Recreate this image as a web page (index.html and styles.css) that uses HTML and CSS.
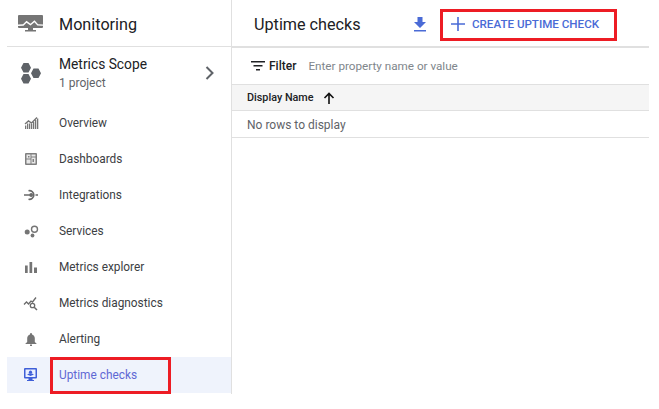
FILE: index.html
```html
<!DOCTYPE html>
<html lang="en">
<head>
<meta charset="utf-8">
<title>Uptime checks</title>
<link rel="stylesheet" href="styles.css">
</head>
<body>
<div class="app">
  <aside class="sidebar">
    <div class="brand">
      <svg class="brand-icon" width="25" height="17" viewBox="0 0 25 17"><path fill="#757575" d="M1 0h23a1 1 0 0 1 1 1v11a1 1 0 0 1-1 1H15v2h3v1.500H7V15h3v-2H1a1 1 0 0 1-1-1V1a1 1 0 0 1 1-1z"/><path fill="#fff" d="M0 9.500l5-.2 3.500-3.500 4 3 4-3.500 3.500 4 5 .2v1.300l-5.600-.2-3-3.300-3.900 3.300-4-2.900-3 3-5.500.2z"/></svg>
      <span class="brand-name">Monitoring</span>
    </div>
    <div class="scope">
      <svg class="scope-icon" width="21" height="21" viewBox="0 0 21 21"><path fill="#5f6368" d="M2.500 0h5L10 4.700 7.500 9.400h-5L0 4.700zM2.500 11h5L10 15.700l-2.500 4.700h-5L0 15.700zM12.500 5.500h5L20 10.200l-2.500 4.700h-5L10 10.200z"/></svg>
      <div class="scope-text">
        <div class="scope-title">Metrics Scope</div>
        <div class="scope-sub">1 project</div>
      </div>
      <svg class="chevron" width="9" height="14" viewBox="0 0 9 14"><path fill="none" stroke="#5f6368" stroke-width="2" d="M1.500 1l6 6-6 6"/></svg>
    </div>
    <nav class="nav">
      <a class="nav-item"><svg class="nav-icon" width="16" height="16" viewBox="0 0 16 16"><path fill="#757575" d="M2 10.500h1.300V14H2zM4 8.500h1.300V14H4zM6 8.500h1.300V14H6zM8 9h1.300v5H8zM10 7h1.300v7H10zM12 5h1.300v9H12zM14 3.500h1.300V14H14z"/><path fill="none" stroke="#757575" stroke-width="1.400" d="M2 9l3.500-3 3 2L14 2.500"/></svg><span>Overview</span></a>
      <a class="nav-item"><svg class="nav-icon" width="16" height="16" viewBox="0 0 16 16"><rect x="2" y="2" width="12" height="12" rx="1" fill="#808080"/><path fill="#e8e8e8" d="M3.500 3.500h4v4h-4zM8.500 3.500h4v2h-4zM8.500 6.500h4v6h-4zM3.500 8.500h4v4h-4z"/><path fill="#808080" d="M5 5h1.500v1.500H5zM9.500 8h1.500v3H9.500z"/></svg><span>Dashboards</span></a>
      <a class="nav-item"><svg class="nav-icon" width="16" height="16" viewBox="0 0 16 16"><path fill="none" stroke="#6a6a6a" stroke-width="1.600" d="M5.500 3.700a4.400 4.400 0 1 1 0 8.600M1 8h7.500M12.500 8H15"/><circle cx="8.200" cy="8" r="1.900" fill="#6a6a6a"/></svg><span>Integrations</span></a>
      <a class="nav-item"><svg class="nav-icon" width="16" height="16" viewBox="0 0 16 16"><circle cx="4.200" cy="9" r="2.500" fill="#757575"/><circle cx="11.500" cy="6.300" r="3" fill="none" stroke="#757575" stroke-width="1.400"/><circle cx="9.500" cy="12.500" r="1.900" fill="#757575"/></svg><span>Services</span></a>
      <a class="nav-item"><svg class="nav-icon" width="16" height="16" viewBox="0 0 16 16"><path fill="#757575" d="M2 6.500h2.700V14H2zM6.500 3h2.700v11H6.500zM11 8.500h3V14h-3z"/></svg><span>Metrics explorer</span></a>
      <a class="nav-item"><svg class="nav-icon" width="16" height="16" viewBox="0 0 16 16"><path fill="none" stroke="#6a6a6a" stroke-width="1.300" d="M1 9.500l2.500-2.500 2 2L8 6l1.500 1L13 2.500"/><circle cx="9.500" cy="10.500" r="2.200" fill="none" stroke="#6a6a6a" stroke-width="1.300"/><path stroke="#6a6a6a" stroke-width="1.500" d="M11.200 12.200l2.800 2.800"/></svg><span>Metrics diagnostics</span></a>
      <a class="nav-item"><svg class="nav-icon" width="16" height="16" viewBox="0 0 16 16"><path fill="#757575" d="M8 2a1 1 0 0 1 1 1v.500c1.700.5 2.800 2 2.800 3.800V11l1.700 1.500v.500h-11v-.500L4.200 11V7.300c0-1.800 1.100-3.300 2.800-3.800V3a1 1 0 0 1 1-1zM7 13.500h2V15H7z"/></svg><span>Alerting</span></a>
      <a class="nav-item active"><svg class="nav-icon" width="16" height="16" viewBox="0 0 16 16"><path fill="#3f5fd8" d="M2 1h11a1 1 0 0 1 1 1v8.500a1 1 0 0 1-1 1H9.500V13H11v1H4v-1h1.500v-1.500H2a1 1 0 0 1-1-1V2a1 1 0 0 1 1-1z"/><path fill="#eaf0ff" d="M2.500 2.500h10v7.500h-10z"/><circle cx="7.500" cy="5.200" r="1.600" fill="#3f5fd8"/><path fill="#3f5fd8" d="M4 7.500c1.500-1.500 5.500-1.500 7 0L7.500 9z"/></svg><span>Uptime checks</span></a>
    </nav>
  </aside>
  <main class="content">
    <header class="topbar">
      <h1 class="title">Uptime checks</h1>
      <svg class="download" width="14" height="15" viewBox="0 0 14 15"><path fill="#4a6bd6" d="M4.500 0h5v5H13L7 11 1 5h3.500zM1 13h12v1.600H1z"/></svg>
      <button class="create">
        <svg width="14" height="14" viewBox="0 0 14 14"><path fill="none" stroke="#4a6bd6" stroke-width="1.600" d="M7 0v14M0 7h14"/></svg>
        <span>CREATE UPTIME CHECK</span>
      </button>
    </header>
    <div class="filter">
      <svg width="14" height="10" viewBox="0 0 14 10"><path fill="#202124" d="M0 0h14v1.500H0zM2.500 4h9v1.500h-9zM5 8h4v1.500H5z"/></svg>
      <span class="filter-label">Filter</span>
      <span class="filter-hint">Enter property name or value</span>
    </div>
    <div class="table-head">
      <span>Display Name</span>
      <svg width="12" height="12" viewBox="0 0 12 12"><path fill="none" stroke="#111" stroke-width="1.600" d="M6 12V1.500M1.500 6L6 1.500 10.500 6"/></svg>
    </div>
    <div class="table-empty">No rows to display</div>
  </main>
</div>
<div class="mark mark-nav"></div>
<div class="mark mark-create"></div>
</body>
</html>
```
FILE: styles.css
```css
* { box-sizing: border-box; }
html, body { margin: 0; height: 100%; background: #fff; }
body { font-family: Roboto, "Liberation Sans", sans-serif; color: #202124; overflow: hidden; position: relative; }
.app { display: flex; width: 642px; height: 394px; margin-left: 7px; }
.sidebar { width: 225px; border-right: 1px solid #e0e0e0; display: flex; flex-direction: column; flex: none; }
.brand { height: 47px; border-bottom: 1px solid #e0e0e0; display: flex; align-items: center; padding: 2px 0 0 11px; }
.brand-icon { flex: none; margin-right: 16px; margin-top: -1px; }
.brand-name { font-size: 16.2px; }
.scope { height: 58px; display: flex; align-items: center; padding: 0 0 6px 14px; }
.scope-icon { flex: none; margin-right: 17px; }
.scope-text { flex: 1; }
.scope-title { font-size: 13.8px; line-height: 20px; }
.scope-sub { font-size: 12px; line-height: 18px; color: #5f6368; }
.chevron { margin-right: 17px; }
.nav { display: flex; flex-direction: column; }
.nav-item { height: 36px; display: flex; align-items: center; padding-left: 16px; font-size: 11.85px; color: #3c4043; }
.nav-icon { flex: none; margin-right: 20px; }
.nav-item.active { background: #eff3fc; color: #5f68d4; }
.content { flex: 1; display: flex; flex-direction: column; min-width: 0; }
.topbar { height: 48px; border-bottom: 2px solid #e0e0e0; display: flex; align-items: center; padding: 2px 0 0 22px; }
.title { font-size: 16.2px; font-weight: 400; margin: 0; width: 159px; }
.download { flex: none; margin-right: 24px; }
.create { border: 0; background: none; padding: 0; display: flex; align-items: center; gap: 7px; font: 500 11.6px Roboto, sans-serif; color: #4a6bd6; }
.filter { height: 37px; display: flex; align-items: center; padding-left: 19px; font-size: 12px; border-bottom: 1px solid #e0e0e0; }
.filter-label { margin-left: 4px; font-weight: 500; }
.filter-hint { margin-left: 12px; font-size: 11.7px; color: #80868b; }
.table-head { height: 26px; background: #f5f5f5; border-bottom: 1px solid #e0e0e0; display: flex; align-items: center; padding-left: 15px; gap: 9px; font-size: 10.8px; font-weight: 500; color: #202124; }
.table-empty { height: 27px; border-bottom: 1px solid #e0e0e0; display: flex; align-items: center; padding: 1px 0 0 15px; font-size: 12px; color: #5f6368; }
.mark { position: absolute; border: 3px solid #ed1c24; }
.mark-nav { left: 50px; top: 357px; width: 121px; height: 37px; }
.mark-create { left: 440px; top: 9px; width: 177px; height: 32px; }
```
